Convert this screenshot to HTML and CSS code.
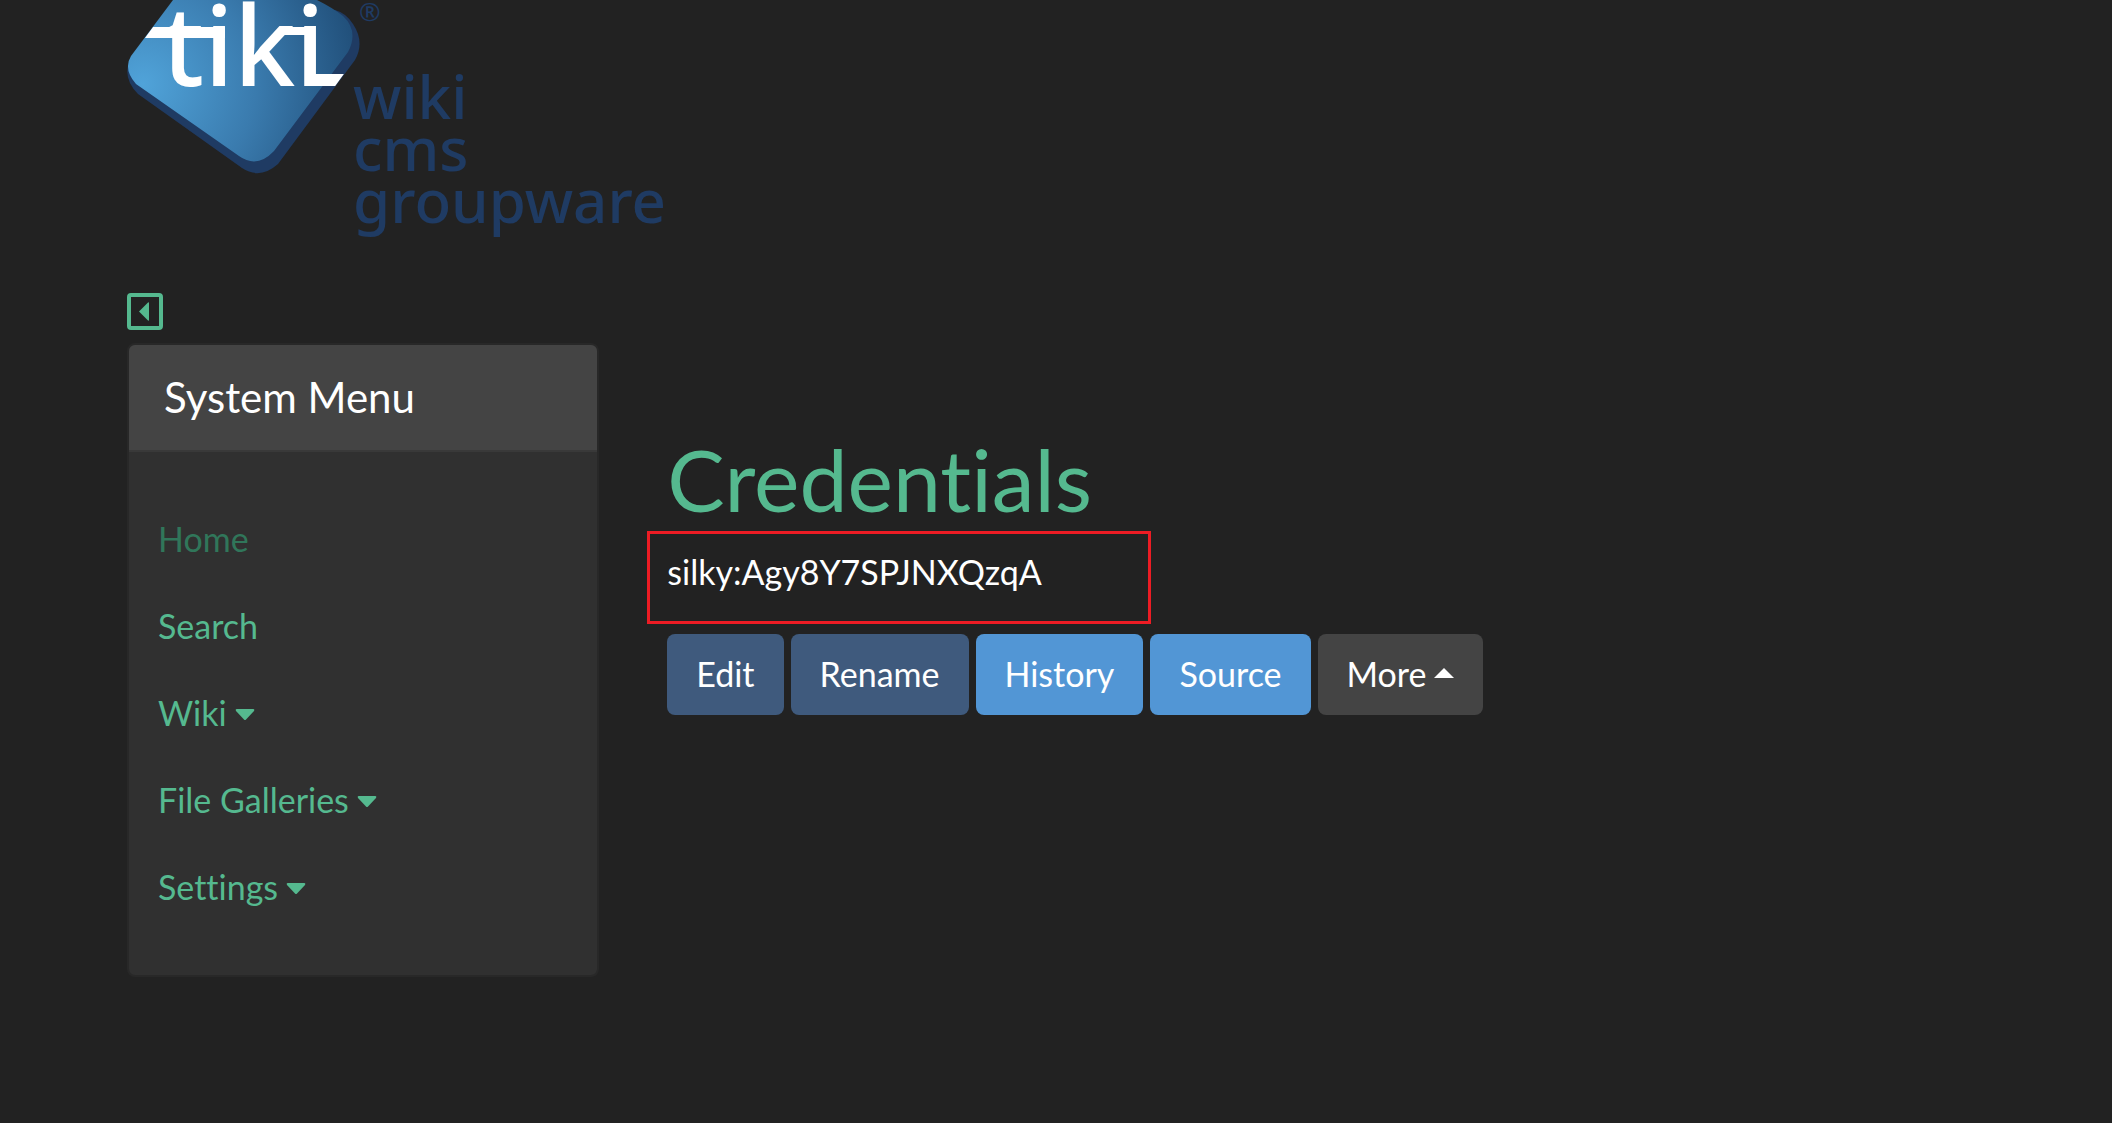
FILE: index.html
```html
<!DOCTYPE html>
<html lang="en">
<head>
<meta charset="utf-8">
<meta name="viewport" content="width=device-width, initial-scale=1">
<title>Credentials</title>
<link rel="stylesheet" href="styles.css">
</head>
<body>
<header class="site-header">
  <a class="logo" href="#">
    <svg class="logo-art" viewBox="0 0 560 245" role="img" aria-label="Tiki Wiki CMS Groupware">
      <defs>
        <radialGradient id="face" gradientUnits="userSpaceOnUse" cx="16" cy="84" r="225">
          <stop offset="0" stop-color="#50a3d9"/>
          <stop offset="0.5" stop-color="#3a7bae"/>
          <stop offset="1" stop-color="#1f4c76"/>
        </radialGradient>
        <clipPath id="tile">
          <path d="M46 0 L4 57 Q-4 75 11 94 L113 167 Q133 181 151 165 L227 60 Q238 38 224 22 L190 0 V-40 H46Z"/>
        </clipPath>
      </defs>
      <path fill="#1f3b63" d="M20 36 L4 58 Q-6 77 11 94 L115 168 Q133 180 151 164 L228 60 Q238 42 226 24 Q219 13 208 10Z"/>
      <path fill="url(#face)" d="M46 0 L4 56 Q-4 69 9 84 L112 156 Q130 169 147 151 L221 52 Q232 31 216 16 Q206 8 190 0Z"/>
      <g fill="#fff" clip-path="url(#tile)">
        <text class="wordmark" x="35" y="86">tiki</text>
        <path d="M10 27 H98 V38 H10Z M154 27 H184 V35 H154Z M182 74 H226 V86 H182Z"/>
      </g>
      <text class="registered" x="232" y="21">®</text>
      <text class="tagline" x="226" y="119">wiki</text>
      <text class="tagline" x="226" y="171">cms</text>
      <text class="tagline" x="226" y="223">groupware</text>
    </svg>
  </a>
</header>
<div class="toolbar">
  <button class="toggle" type="button" aria-label="Hide left column">
    <svg viewBox="0 0 36 37" aria-hidden="true"><rect x="2" y="2" width="32" height="33" rx="2" fill="none" stroke="currentColor" stroke-width="4"/><path fill="currentColor" d="M12 18.500 L21 9.500 Q22 9 22 10 V27 Q22 28 21 27.500Z"/></svg>
  </button>
</div>
<div class="layout">
  <aside class="card">
    <h2 class="card-title">System Menu</h2>
    <nav class="menu">
      <a class="menu-link current" href="#">Home</a>
      <a class="menu-link" href="#">Search</a>
      <a class="menu-link" href="#">Wiki<svg class="caret" viewBox="0 0 20 12" aria-hidden="true"><path d="M1.500 0 H18.500 Q20 .5 19 2 L11 10.500 Q10 11.500 9 10.500 L1 2 Q0 .5 1.500 0Z"/></svg></a>
      <a class="menu-link" href="#">File Galleries<svg class="caret" viewBox="0 0 20 12" aria-hidden="true"><path d="M1.500 0 H18.500 Q20 .5 19 2 L11 10.500 Q10 11.500 9 10.500 L1 2 Q0 .5 1.500 0Z"/></svg></a>
      <a class="menu-link" href="#">Settings<svg class="caret" viewBox="0 0 20 12" aria-hidden="true"><path d="M1.500 0 H18.500 Q20 .5 19 2 L11 10.500 Q10 11.500 9 10.500 L1 2 Q0 .5 1.500 0Z"/></svg></a>
    </nav>
  </aside>
  <main class="content">
    <h1 class="page-title">Credentials</h1>
    <p class="highlight">silky:Agy8Y7SPJNXQzqA</p>
    <div class="actions">
      <button class="btn primary" type="button">Edit</button>
      <button class="btn primary" type="button">Rename</button>
      <button class="btn info" type="button">History</button>
      <button class="btn info" type="button">Source</button>
      <button class="btn more" type="button">More<svg class="caret up" viewBox="0 0 20 10" aria-hidden="true"><path d="M0 10 L10 0 L20 10Z"/></svg></button>
    </div>
  </main>
</div>
</body>
</html>
```
FILE: styles.css
```css
* { box-sizing: border-box; }
body {
  margin: 0;
  padding: 0 28px 0 127px;
  background: #222;
  color: #fff;
  font: 34px/52px Lato, sans-serif;
  font-variant-ligatures: none;
}
.logo { display: block; width: 560px; max-width: 100%; }
.logo-art { display: block; width: 100%; overflow: hidden; }
.wordmark { font: 500 110px "Noto Sans", sans-serif; }
.registered { font: 26px "Noto Sans", sans-serif; fill: #1f3b63; }
.tagline { font: 500 60px "Noto Sans", sans-serif; fill: #1f3b63; }
.toolbar { padding: 48px 0 13px; }
.toggle {
  display: block;
  width: 36px;
  height: 37px;
  padding: 0;
  border: 0;
  background: none;
  color: #55b98f;
}
.toggle svg { display: block; }
.layout {
  display: grid;
  grid-template-columns: minmax(0, 1fr) minmax(0, 3fr);
  gap: 68px;
  align-items: start;
}
.card {
  border: 2px solid #282828;
  border-radius: 8px;
  background: #303030;
  overflow: hidden;
}
.card-title {
  margin: 0;
  padding: 26px 35px 27px;
  border-bottom: 2px solid #393939;
  background: #444;
  font-size: 42px;
  font-weight: 400;
}
.menu { display: flex; flex-direction: column; padding: 43px 29px 45px; }
.menu-link { line-height: 87px; color: #55b98f; text-decoration: none; }
.current { color: #30765a; }
.caret { width: 20px; height: 12px; margin-left: 8px; fill: currentColor; vertical-align: 5px; }
.up { height: 10px; vertical-align: 9px; }
.content { padding-top: 86px; }
.page-title {
  margin: 0 0 2px;
  color: #55b98f;
  font-size: 86px;
  font-weight: 400;
  line-height: 100px;
}
.highlight {
  max-width: 504px;
  margin: 0 0 10px -20px;
  padding: 12px 17px 23px;
  border: 3px solid #ed1c24;
}
.actions { display: flex; flex-wrap: wrap; gap: 7px; }
.btn {
  padding: 14px 29px 15px;
  border: 0;
  border-radius: 8px;
  color: #fff;
  font: inherit;
  font-variant-ligatures: none;
}
.primary { background: #3f5a7d; }
.info { background: #5296d5; }
.more { background: #444; }
```
